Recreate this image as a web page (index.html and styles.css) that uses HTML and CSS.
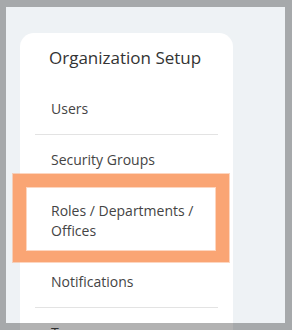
FILE: index.html
```html
<!DOCTYPE html>
<html lang="en">
<head>
<meta charset="utf-8">
<title>Organization Setup</title>
<link rel="stylesheet" href="styles.css">
</head>
<body>
<main class="panel">
  <nav class="card">
    <h2 class="card-title">Organization Setup</h2>
    <ul class="menu">
      <li class="menu-item">Users</li>
      <li class="menu-item">Security Groups</li>
      <li class="menu-item is-highlighted">Roles / Departments / Offices<span class="highlight"></span></li>
      <li class="menu-item">Notifications</li>
      <li class="menu-item">Teams</li>
    </ul>
  </nav>
</main>
<div class="frame"></div>
</body>
</html>
```
FILE: styles.css
```css
html, body {
  margin: 0;
  padding: 0;
  overflow: hidden;
}
body {
  background: #eef2f5;
  font-family: "Open Sans", "Noto Sans", sans-serif;
  height: 330px;
}
.panel {
  padding: 33px 0 0 20px;
}
.card {
  position: relative;
  width: 183px;
  padding: 13px 15px 40px;
  background: #ffffff;
  border-radius: 14px;
}
.card-title {
  margin: 0 0 14px 14px;
  font-size: 17px;
  line-height: 24px;
  font-weight: 400;
  color: #333333;
}
.menu {
  list-style: none;
  margin: 0;
  padding: 0;
}
.menu-item {
  position: relative;
  padding: 15px 0 15px 16px;
  font-size: 14px;
  line-height: 20px;
  color: #444444;
  border-bottom: 1px solid #e3e3e3;
}
.highlight {
  position: absolute;
  left: -22px;
  top: -12px;
  width: 190px;
  height: 64px;
  border-style: solid;
  border-color: #faa574;
  border-width: 13px 13px 11px 13px;
  box-shadow: 0 0 0 1px rgba(250, 165, 116, 0.45), inset 0 0 0 1px rgba(250, 165, 116, 0.45);
}
.frame {
  position: fixed;
  inset: 0;
  border-style: solid;
  border-color: rgba(0, 0, 0, 0.3);
  border-width: 7px 7px 7px 6px;
  pointer-events: none;
}
```
